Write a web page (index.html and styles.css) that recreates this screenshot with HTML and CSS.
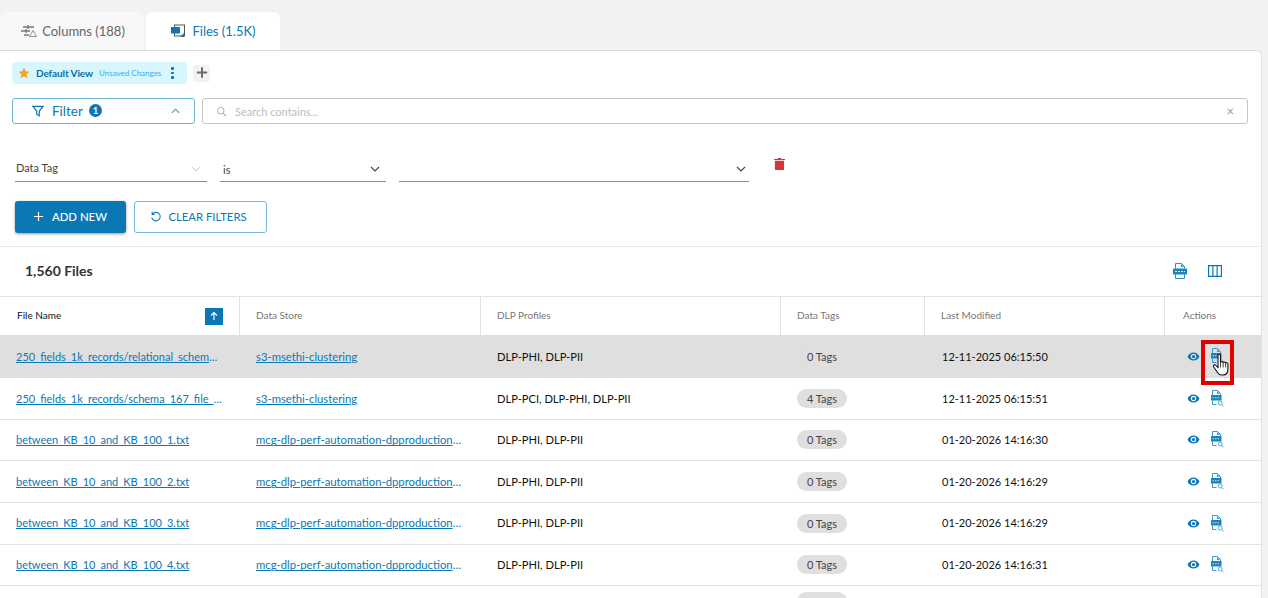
FILE: index.html
```html
<!DOCTYPE html>
<html lang="en">
<head>
<meta charset="utf-8">
<title>Files</title>
<link rel="stylesheet" href="styles.css">
</head>
<body>
<svg class="defs" width="0" height="0" aria-hidden="true">
  <symbol id="eye" viewBox="0 0 24 24"><path fill="currentColor" d="M12 4.5C7 4.5 2.7 7.6 1 12c1.700 4.400 6 7.500 11 7.500s9.300-3.100 11-7.500c-1.700-4.400-6-7.500-11-7.500zm0 12.500a5 5 0 1 1 0-10 5 5 0 0 1 0 10zm0-8a3 3 0 1 0 0 6 3 3 0 0 0 0-6z"/></symbol>
  <symbol id="csv" viewBox="0 0 14 16"><path fill="none" stroke="#2f8fc2" d="M2.500 5.500V.5h6l3 3v2M2.500 11.500v4h9v-4"/><path fill="#2f8fc2" d="M8 1v3h3z"/><rect fill="#1b82ba" x="0" y="5.500" width="14" height="6" rx=".5"/><path stroke="#d5ecf8" stroke-width="1" stroke-dasharray="2 1" d="M2 8.500h10"/></symbol>
  <symbol id="csvq" viewBox="0 0 14 17"><path fill="none" stroke="#3d97c8" d="M2.500 5V.5h5l3 3V5M2.500 10.500v4h4"/><path fill="#3d97c8" d="M7 1v3h3z"/><rect fill="#1b82ba" x="1" y="5" width="10.500" height="5.500" rx=".5"/><path stroke="#d5ecf8" stroke-width=".9" stroke-dasharray="1.500 1" d="M2.500 7.750h7.500"/><circle cx="10.200" cy="13" r="2" fill="none" stroke="#4aa0ce" stroke-width=".9"/><path stroke="#4aa0ce" stroke-width="1" d="M11.600 14.400l1.900 1.900"/></symbol>
</svg>

<nav class="tabs">
  <div class="tab">
    <svg class="tab-icon" viewBox="0 0 16 14"><path fill="none" stroke="#777" stroke-width="1.300" d="M2 3h11M0 7h9M3 11h5M7 1v4M5 5v4"/><path fill="none" stroke="#888" stroke-width=".9" d="M12 6.500l3.500 6h-7z"/></svg>
    <span>Columns (188)</span>
  </div>
  <div class="tab active">
    <svg class="tab-icon" viewBox="0 0 16 14"><rect x="4.500" y="1" width="10" height="11" fill="#fff" stroke="#555"/><rect x="1" y="3" width="9" height="6.500" fill="#0a78b4"/><path fill="#0a78b4" d="M10 13l4-4v4z"/></svg>
    <span>Files (1.5K)</span>
  </div>
</nav>

<main class="card">
  <div class="view-row">
    <div class="view-chip">
      <svg class="star" viewBox="0 0 24 24"><path fill="#f5a623" d="M12 1.500l3.300 7 7.700.9-5.700 5.200 1.500 7.600L12 18.400l-6.800 3.800 1.500-7.600L1 9.400l7.700-.9z"/></svg>
      <span class="view-name">Default View</span>
      <span class="view-note">Unsaved Changes</span>
      <span class="dots"><i></i><i></i><i></i></span>
    </div>
    <button class="add-view" aria-label="Add view"><svg viewBox="0 0 14 14"><path stroke="#6e6e6e" stroke-width="2.400" d="M7 1v12M1 7h12"/></svg></button>
  </div>

  <div class="search-row">
    <button class="filter-btn">
      <svg class="funnel" viewBox="0 0 14 14"><path fill="none" stroke="#0a78b4" stroke-width="1.400" d="M1 1.500h12L8.500 7v5.500l-3-1.500V7z"/></svg>
      <span>Filter</span>
      <span class="count">1</span>
      <svg class="caret-up" viewBox="0 0 10 6"><path fill="none" stroke="#3a9cc8" stroke-width="1.200" d="M1 5l4-4 4 4"/></svg>
    </button>
    <div class="search">
      <svg class="mag" viewBox="0 0 14 14"><circle cx="6" cy="6" r="4.200" fill="none" stroke="#aaa" stroke-width="1.200"/><path stroke="#aaa" stroke-width="1.300" d="M9 9l4 4"/></svg>
      <span class="placeholder">Search contains...</span>
      <span class="clear-x">×</span>
    </div>
  </div>

  <div class="filter-row">
    <div class="select s1"><span class="sel-t1">Data Tag</span><svg class="chev" viewBox="0 0 10 6"><path fill="none" stroke="#ccc" d="M1 1l4 4 4-4"/></svg></div>
    <div class="select s2"><span class="sel-t2">is</span><svg class="chev" viewBox="0 0 10 6"><path fill="none" stroke="#444" stroke-width="1.100" d="M1 1l4 4 4-4"/></svg></div>
    <div class="select s3"><span></span><svg class="chev" viewBox="0 0 10 6"><path fill="none" stroke="#444" stroke-width="1.100" d="M1 1l4 4 4-4"/></svg></div>
    <svg class="trash" viewBox="0 0 12 14"><path fill="#d6343a" d="M0 2h4l.5-1h3l.5 1h4v1.200H0zM1 4h10v9a1 1 0 0 1-1 1H2a1 1 0 0 1-1-1z"/></svg>
  </div>

  <div class="btn-row">
    <button class="btn-primary"><svg viewBox="0 0 12 12"><path stroke="#fff" stroke-width="1.300" d="M6 1v10M1 6h10"/></svg>ADD NEW</button>
    <button class="btn-outline"><svg viewBox="0 0 14 14"><path fill="none" stroke="#0a78b4" stroke-width="1.200" d="M3 3.500A5 5 0 1 1 2 7.500M2.500 1v3h3"/></svg>CLEAR FILTERS</button>
  </div>

  <div class="title-row">
    <h1>1,560 Files</h1>
    <div class="title-icons">
      <svg class="t-csv"><use href="#csv"/></svg>
      <svg class="t-cols" viewBox="0 0 14 12"><path fill="none" stroke="#0a78b4" stroke-width="1.200" d="M.6.6h12.800v10.800H.6zM4.900.6v10.800M9.100.6v10.800"/></svg>
    </div>
  </div>

  <div class="table">
    <div class="row head">
      <div class="cell first-head"><span class="fname-h">File Name</span><span class="sort"><svg viewBox="0 0 10 10"><path fill="none" stroke="#fff" stroke-width="1.200" d="M5 9V1.500M2 4.500l3-3 3 3"/></svg></span></div>
      <div class="cell">Data Store</div>
      <div class="cell">DLP Profiles</div>
      <div class="cell">Data Tags</div>
      <div class="cell">Last Modified</div>
      <div class="cell">Actions</div>
    </div>

    <div class="row r1 hover">
      <div class="cell"><a class="link ell">250_fields_1k_records/relational_schema_167_file_1.csv</a></div>
      <div class="cell"><a class="link store ell">s3-msethi-clustering</a></div>
      <div class="cell prof">DLP-PHI, DLP-PII</div>
      <div class="cell tagc"><span class="tag">0 Tags</span></div>
      <div class="cell">12-11-2025 06:15:50</div>
      <div class="cell acts"><svg class="eye"><use href="#eye"/></svg><span class="hl"><svg class="csvq"><use href="#csvq"/></svg>
        <svg class="cursor" viewBox="0 0 18 24"><path fill="#fff" stroke="#111" stroke-width="1.100" stroke-linejoin="round" d="M5.500 2.500c0-1.600 2.500-1.600 2.500 0v7c.3-1.300 2.500-1.300 2.600.2 .3-1.200 2.400-1 2.500.5 .4-1 2.300-.7 2.300.8v5c0 3-1.500 6-5 6H9c-2 0-3-1-4-2.500L1.200 14c-1-1.700 1-3 2.300-1.500l2 2.200z"/><path stroke="#111" stroke-width=".8" d="M8 10v4.500M10.600 10v4.500M13.100 11v3.500"/></svg>
      </span></div>
    </div>
    <div class="row r2">
      <div class="cell"><a class="link ell">250_fields_1k_records/schema_167_file_1_relational.csv</a></div>
      <div class="cell"><a class="link store ell">s3-msethi-clustering</a></div>
      <div class="cell prof">DLP-PCI, DLP-PHI, DLP-PII</div>
      <div class="cell tagc"><span class="tag">4 Tags</span></div>
      <div class="cell">12-11-2025 06:15:51</div>
      <div class="cell acts"><svg class="eye"><use href="#eye"/></svg><svg class="csvq"><use href="#csvq"/></svg></div>
    </div>
    <div class="row r3">
      <div class="cell"><a class="link ell">between_KB_10_and_KB_100_1.txt</a></div>
      <div class="cell"><a class="link store ell">mcg-dlp-perf-automation-dpproductionbucket</a></div>
      <div class="cell prof">DLP-PHI, DLP-PII</div>
      <div class="cell tagc"><span class="tag">0 Tags</span></div>
      <div class="cell">01-20-2026 14:16:30</div>
      <div class="cell acts"><svg class="eye"><use href="#eye"/></svg><svg class="csvq"><use href="#csvq"/></svg></div>
    </div>
    <div class="row r4">
      <div class="cell"><a class="link ell">between_KB_10_and_KB_100_2.txt</a></div>
      <div class="cell"><a class="link store ell">mcg-dlp-perf-automation-dpproductionbucket</a></div>
      <div class="cell prof">DLP-PHI, DLP-PII</div>
      <div class="cell tagc"><span class="tag">0 Tags</span></div>
      <div class="cell">01-20-2026 14:16:29</div>
      <div class="cell acts"><svg class="eye"><use href="#eye"/></svg><svg class="csvq"><use href="#csvq"/></svg></div>
    </div>
    <div class="row r5">
      <div class="cell"><a class="link ell">between_KB_10_and_KB_100_3.txt</a></div>
      <div class="cell"><a class="link store ell">mcg-dlp-perf-automation-dpproductionbucket</a></div>
      <div class="cell prof">DLP-PHI, DLP-PII</div>
      <div class="cell tagc"><span class="tag">0 Tags</span></div>
      <div class="cell">01-20-2026 14:16:29</div>
      <div class="cell acts"><svg class="eye"><use href="#eye"/></svg><svg class="csvq"><use href="#csvq"/></svg></div>
    </div>
    <div class="row r6">
      <div class="cell"><a class="link ell">between_KB_10_and_KB_100_4.txt</a></div>
      <div class="cell"><a class="link store ell">mcg-dlp-perf-automation-dpproductionbucket</a></div>
      <div class="cell prof">DLP-PHI, DLP-PII</div>
      <div class="cell tagc"><span class="tag">0 Tags</span></div>
      <div class="cell">01-20-2026 14:16:31</div>
      <div class="cell acts"><svg class="eye"><use href="#eye"/></svg><svg class="csvq"><use href="#csvq"/></svg></div>
    </div>
    <div class="row r7">
      <div class="cell"></div><div class="cell"></div><div class="cell"></div>
      <div class="cell tagc"><span class="tag">0 Tags</span></div>
      <div class="cell"></div><div class="cell"></div>
    </div>
  </div>
</main>
</body>
</html>
```

FILE: styles.css
```css
*, *::after { box-sizing: border-box; }
html, body { margin: 0; height: 598px; overflow: hidden; }
body { background: #f2f2f2; font-family: Lato, "Open Sans", sans-serif; color: #222; font-size: 12px; }
.defs { position: absolute; }
button { font-family: inherit; cursor: pointer; }

.tabs { display: flex; gap: 2px; padding-top: 12px; height: 50px; }
.tab { width: 144px; height: 38px; padding: 0 0 1px 2px; background: #f8f8f8; border-radius: 6px 6px 0 0; display: flex; align-items: center; justify-content: center; gap: 5px; font-size: 13px; color: #666; }
.tab.active { width: 134px; padding-left: 0; background: #fff; color: #0a78b4; gap: 6px; }
.tab-icon { width: 16px; height: 14px; }

.card { width: 1262px; height: 548px; background: #fff; border-top: 1px solid #d9d9d9; border-right: 1px solid #e2e2e2; border-top-right-radius: 6px; overflow: hidden; }

.view-row { display: flex; align-items: center; gap: 6px; padding: 11px 0 0 12px; height: 33px; }
.view-chip { width: 175px; height: 22px; background: #d6f7fd; border-radius: 4px; display: flex; align-items: center; padding-left: 6px; }
.star { width: 12px; height: 12px; margin-right: 6px; }
.view-name { font-size: 10px; font-weight: 700; color: #0a6ea6; margin-right: 6px; white-space: nowrap; letter-spacing: -.1px; }
.view-note { font-size: 8px; color: #48a8ec; white-space: nowrap; }
.dots { display: flex; flex-direction: column; gap: 2px; margin-left: 10px; }
.dots i { width: 2.500px; height: 2.500px; background: #0a6ea6; border-radius: 50%; display: block; }
.add-view { width: 17px; height: 17px; padding: 1px 2px 3px 3px; border: 0; border-radius: 3px; background: #f3f3f3; display: flex; }
.add-view svg { width: 13px; height: 13px; }

.search-row { display: flex; gap: 7px; padding: 14px 0 0 12px; }
.filter-btn { width: 183px; height: 26px; padding: 0 14px 1px 19px; border: 1px solid #6fb4d8; border-radius: 3px; background: #fff; display: flex; align-items: center; color: #0a78b4; font-size: 13.500px; }
.funnel { width: 12px; height: 12px; margin-right: 8px; }
.count { width: 13px; height: 13px; margin-left: 6px; border-radius: 50%; background: #0a78b4; color: #fff; font-size: 9.500px; font-weight: 700; line-height: 13px; text-align: center; }
.caret-up { width: 9px; height: 6px; margin-left: auto; }
.search { width: 1046px; height: 26px; border: 1px solid #c4c4c4; border-radius: 3px; display: flex; align-items: center; padding: 0 13px; }
.mag { width: 11px; height: 11px; margin-right: 8px; }
.placeholder { font-size: 11px; color: #bdbdbd; }
.clear-x { margin-left: auto; color: #999; font-size: 13px; }

.filter-row { display: flex; align-items: flex-start; padding: 31px 0 0 15px; height: 77px; }
.select { height: 27px; border-bottom: 1px solid #8c8c8c; display: flex; align-items: center; justify-content: space-between; padding-right: 6px; }
.s1 { width: 192px; padding-left: 1px; margin-right: 13px; }
.s2 { width: 166px; padding-left: 3px; margin-right: 13px; }
.s3 { width: 350px; padding-right: 3px; }
.sel-t1 { font-size: 11px; color: #444; margin-top: -1px; }
.sel-t2 { font-size: 11px; color: #444; margin-top: 2px; }
.chev { width: 10px; height: 6px; margin-top: 2px; }
.trash { width: 11px; height: 13px; margin: 2px 0 0 25px; }

.btn-row { display: flex; gap: 8px; padding-left: 15px; height: 45px; }
.btn-primary { width: 111px; height: 32px; padding: 0 1px 1px 0; background: #0a78b4; color: #fff; border: 0; border-radius: 3px; box-shadow: 0 1px 3px rgba(0,0,0,.4); font-size: 11.400px; font-weight: 500; display: flex; align-items: center; justify-content: center; gap: 8px; }
.btn-primary svg { width: 11px; height: 11px; }
.btn-outline { width: 133px; height: 32px; padding: 0 4px 1px 0; background: #fff; color: #0a78b4; border: 1px solid #78b9dc; border-radius: 3px; font-size: 11.300px; display: flex; align-items: center; justify-content: center; gap: 6px; }
.btn-outline svg { width: 12px; height: 12px; }

.title-row { border-top: 1px solid #ececec; height: 50px; display: flex; align-items: center; justify-content: space-between; padding: 0 39px 2px 25px; }
.title-row h1 { margin: 0; font-size: 14px; font-weight: 700; color: #333; }
.title-icons { display: flex; align-items: center; gap: 21px; }
.t-csv { width: 14px; height: 16px; }
.t-cols { width: 14px; height: 12px; }

.table { border-top: 1px solid #e2e2e2; }
.row { display: grid; grid-template-columns: 240px 241px 300px 144px 240px 1fr; border-bottom: 1px solid #e2e2e2; align-items: center; }
.head { height: 38px; color: #777; font-size: 10px; align-items: stretch; border-bottom: 0; }
.head .cell { display: flex; align-items: center; padding: 0 0 2px 16px; border-right: 1px solid #e2e2e2; }
.head .cell:last-child { border-right: 0; padding-left: 18px; }
.head .first-head { justify-content: space-between; padding-right: 16px; padding-left: 17px; }
.fname-h { color: #111; }
.sort { width: 18px; height: 17px; margin-top: 2px; background: #0a78b4; display: flex; align-items: center; justify-content: center; }
.sort svg { width: 10px; height: 10px; }
.r1 { height: 43px; border-bottom: 0; }
.r2, .r3, .r4, .r5, .r6 { height: 41.670px; }
.r7 { height: 30px; border-bottom: 0; }
.hover { background: #dfdfdf; }
.row:not(.head) .cell { padding-left: 16px; min-width: 0; font-size: 11px; color: #111; }
.row:not(.head) .cell:nth-child(5) { padding-left: 17px; }
.row:not(.head) .prof { font-size: 11.150px; }
.row.r5 .cell:not(.acts):not(.tagc) { padding-bottom: 1px; }
.link { display: block; color: #0a78b4; text-decoration: underline; font-size: 11px; }
.store { font-size: 11.300px; }
.ell { max-width: 206px; overflow: hidden; white-space: nowrap; text-overflow: ellipsis; }
.tagc { display: flex; }
.tag { width: 50px; height: 19px; background: #dfdfdf; border-radius: 10px; color: #444; font-size: 11px; line-height: 19px; text-align: center; }
.acts { display: flex; align-items: center; gap: 10px; }
.row:not(.head) .acts { padding-left: 22px; }
.eye { width: 13px; height: 13px; color: #0a78b4; }
.csvq { width: 14px; height: 17px; }
.hl { position: relative; display: flex; width: 14px; height: 17px; }
.hl::after { content: ""; position: absolute; left: -9px; top: -8px; width: 33px; height: 45px; border: 4px solid #e00000; }
.cursor { position: absolute; left: 2px; top: 5px; width: 19px; height: 24px; z-index: 1; }
```
